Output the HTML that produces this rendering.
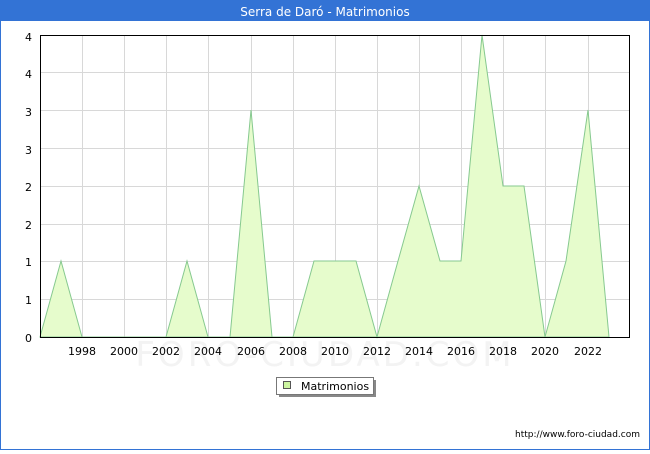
<!DOCTYPE html>
<html><head><style>
body{margin:0;width:650px;height:450px;overflow:hidden;font-family:"DejaVu Sans","Liberation Sans",sans-serif;background:#fff}
</style></head><body>
<svg width="650" height="450" xmlns="http://www.w3.org/2000/svg" font-family="DejaVu Sans, Liberation Sans, sans-serif">
<rect x="0" y="0" width="650" height="450" fill="#3373d5"/>
<rect x="1" y="21" width="648" height="428" fill="#fff"/>
<text x="325" y="16" fill="#fff" font-size="12" text-anchor="middle">Serra de Daró - Matrimonios</text>
<g stroke="#d8d8d8" stroke-width="1">
<line x1="40" x2="630" y1="72.5" y2="72.5"/><line x1="40" x2="630" y1="110.5" y2="110.5"/><line x1="40" x2="630" y1="148.5" y2="148.5"/><line x1="40" x2="630" y1="186.5" y2="186.5"/><line x1="40" x2="630" y1="224.5" y2="224.5"/><line x1="40" x2="630" y1="261.5" y2="261.5"/><line x1="40" x2="630" y1="299.5" y2="299.5"/>
<line y1="35" y2="337" x1="82.5" x2="82.5"/><line y1="35" y2="337" x1="124.5" x2="124.5"/><line y1="35" y2="337" x1="166.5" x2="166.5"/><line y1="35" y2="337" x1="208.5" x2="208.5"/><line y1="35" y2="337" x1="251.5" x2="251.5"/><line y1="35" y2="337" x1="293.5" x2="293.5"/><line y1="35" y2="337" x1="335.5" x2="335.5"/><line y1="35" y2="337" x1="377.5" x2="377.5"/><line y1="35" y2="337" x1="419.5" x2="419.5"/><line y1="35" y2="337" x1="461.5" x2="461.5"/><line y1="35" y2="337" x1="503.5" x2="503.5"/><line y1="35" y2="337" x1="545.5" x2="545.5"/><line y1="35" y2="337" x1="588.5" x2="588.5"/>
</g>
<text x="325" y="366" font-size="34" fill="#f3f3f3" text-anchor="middle" letter-spacing="3">FORO-CIUDAD.COM</text>
<polygon fill="#e6fccc" stroke="#86c98f" stroke-width="1" points="40,337 61,261 82,337 166,337 187,261 208,337 230,337 251,110 272,337 293,337 314,261 335,261 356,261 377,337 398,261 419,186 440,261 461,261 482,35 503,186 524,186 545,337 566,261 588,110 609,337"/>
<rect x="40.5" y="35.5" width="589" height="302" fill="none" stroke="#000"/>
<g font-size="11" fill="#000" text-anchor="end">
<text x="32" y="41">4</text><text x="32" y="78">4</text><text x="32" y="116">3</text><text x="32" y="154">3</text><text x="32" y="191">2</text><text x="32" y="229">2</text><text x="32" y="266">1</text><text x="32" y="304">1</text><text x="32" y="342">0</text>
</g>
<g font-size="11" fill="#000" text-anchor="middle">
<text x="82" y="355">1998</text><text x="124" y="355">2000</text><text x="166" y="355">2002</text><text x="208" y="355">2004</text><text x="251" y="355">2006</text><text x="293" y="355">2008</text><text x="335" y="355">2010</text><text x="377" y="355">2012</text><text x="419" y="355">2014</text><text x="461" y="355">2016</text><text x="503" y="355">2018</text><text x="545" y="355">2020</text><text x="588" y="355">2022</text>
</g>
<rect x="279" y="380" width="97" height="17" fill="#888"/>
<rect x="276.5" y="377.5" width="97" height="17" fill="#fff" stroke="#777"/>
<rect x="283.5" y="381.5" width="7" height="7" fill="#ccf5a0" stroke="#555"/>
<text x="301" y="390" font-size="11">Matrimonios</text>
<text x="640" y="437" font-size="9" text-anchor="end">http://www.foro-ciudad.com</text>
</svg>
</body></html>
